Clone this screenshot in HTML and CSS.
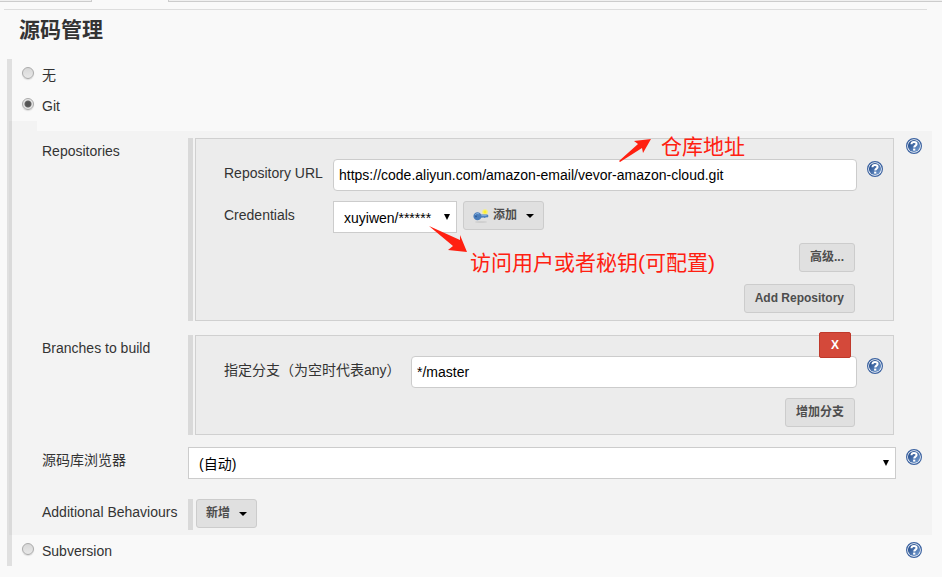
FILE: index.html
```html
<!DOCTYPE html>
<html lang="zh-CN">
<head>
    <meta charset="UTF-8">
    <meta name="viewport" content="width=device-width, initial-scale=1.0">
    <title>源码管理</title>
    <link rel="stylesheet" href="styles.css">
</head>
<body>
    <!-- shared icon shapes -->
    <svg class="sprite" aria-hidden="true">
        <defs>
            <linearGradient id="help-fill" x1="0" y1="0" x2="1" y2="1">
                <stop offset="0" stop-color="#173f80"/>
                <stop offset="1" stop-color="#7ba3d6"/>
            </linearGradient>
            <symbol id="help" viewBox="0 0 16 16">
                <circle cx="8" cy="8" r="7.4" fill="#fff" stroke="#3b62a0" stroke-width="1.2"/>
                <circle cx="8" cy="8" r="6.1" fill="url(#help-fill)"/>
                <path d="M5.4 6.3C5.5 4.5 6.6 3.9 8 3.9c1.6 0 2.6.8 2.6 2.1 0 1.6-2.4 1.6-2.4 3.6" fill="none" stroke="#fff" stroke-width="2"/>
                <rect x="7.1" y="10.6" width="2.2" height="2" fill="#fff"/>
            </symbol>
        </defs>
    </svg>

    <div class="tabs">
        <span class="tab tab-left"></span>
        <span class="tab tab-right"></span>
    </div>

    <form class="config">
        <h1>源码管理</h1>

        <div class="scm">
            <div class="choice">
                <input type="radio" name="scm" id="scm-none">
                <label for="scm-none">无</label>
            </div>
            <div class="choice">
                <input type="radio" name="scm" id="scm-git" checked>
                <label for="scm-git">Git</label>
            </div>

            <div class="notch"></div>
            <div class="git">
                <div class="row row-repositories">
                    <span class="name">Repositories</span>
                    <div class="chunk">
                        <div class="box">
                            <div class="field">
                                <label for="url">Repository URL</label>
                                <input type="text" id="url" value="https://code.aliyun.com/amazon-email/vevor-amazon-cloud.git">
                                <a class="help" href="#" aria-label="Help"><svg><use href="#help"/></svg></a>
                            </div>
                            <div class="field">
                                <label for="credentials">Credentials</label>
                                <div class="credentials">
                                    <div class="select">
                                        <select id="credentials">
                                            <option>xuyiwen/******</option>
                                        </select>
                                    </div>
                                    <button type="button" class="btn btn-menu">
                                        <svg class="key" viewBox="0 0 16 16" aria-hidden="true">
                                            <ellipse cx="8" cy="14" rx="6" ry="1" fill="#cfcfcf"/>
                                            <circle cx="12" cy="4" r="2.8" fill="#f7ef7a"/>
                                            <circle cx="12" cy="4" r="1.4" fill="#fff02a"/>
                                            <path d="M4.6 4.2C6.4 4.2 7.6 5.2 8.2 6.6L14.4 6.6 15.6 8 14.4 9.4 13 9.2 11.8 10 10.4 9.6 8.2 9.8C7.6 11.2 6.4 12.2 4.6 12.2 2.2 12.2.4 10.4.4 8.2.4 6 2.2 4.2 4.6 4.2Z" fill="#4a7dbb"/>
                                            <path d="M2 7C2.6 5.6 4.6 5 6.2 6M8.4 7.6H13.6" fill="none" stroke="#86afdd"/>
                                            <circle cx="3" cy="8.4" r="0.8" fill="#2b5590"/>
                                        </svg>
                                        添加
                                        <span class="caret"></span>
                                    </button>
                                </div>
                            </div>
                            <div class="actions">
                                <button type="button" class="btn">高级...</button>
                            </div>
                            <div class="actions">
                                <button type="button" class="btn">Add Repository</button>
                            </div>

                            <svg class="arrow arrow-url" viewBox="0 0 33 24" aria-hidden="true">
                                <path d="M0 22 L19 5 L15 2 L32 0 L24 14 L23 9 L1 23 Z"/>
                            </svg>
                            <span class="note note-url">仓库地址</span>
                            <svg class="arrow arrow-user" viewBox="0 0 39 27" aria-hidden="true">
                                <path d="M0 0 L31 14 L31 9 L38 26 L19 24 L24 20 Z"/>
                            </svg>
                            <span class="note note-user">访问用户或者秘钥(可配置)</span>
                        </div>
                    </div>
                    <a class="help" href="#" aria-label="Help"><svg><use href="#help"/></svg></a>
                </div>

                <div class="row">
                    <span class="name">Branches to build</span>
                    <div class="chunk">
                        <div class="box">
                            <button type="button" class="delete">X</button>
                            <div class="field field-wide">
                                <label for="branch">指定分支（为空时代表any）</label>
                                <input type="text" id="branch" value="*/master">
                                <a class="help" href="#" aria-label="Help"><svg><use href="#help"/></svg></a>
                            </div>
                            <div class="actions">
                                <button type="button" class="btn">增加分支</button>
                            </div>
                        </div>
                    </div>
                </div>

                <div class="row">
                    <label class="name" for="browser">源码库浏览器</label>
                    <div class="select">
                        <select id="browser">
                            <option>(自动)</option>
                        </select>
                    </div>
                    <a class="help help-low" href="#" aria-label="Help"><svg><use href="#help"/></svg></a>
                </div>

                <div class="row">
                    <span class="name">Additional Behaviours</span>
                    <div class="chunk chunk-plain">
                        <button type="button" class="btn btn-menu">新增 <span class="caret"></span></button>
                    </div>
                </div>
            </div>

            <div class="choice">
                <input type="radio" name="scm" id="scm-svn">
                <label for="scm-svn">Subversion</label>
                <a class="help" href="#" aria-label="Help"><svg><use href="#help"/></svg></a>
            </div>
        </div>
    </form>
</body>
</html>
```

FILE: styles.css
```css
* {
    box-sizing: border-box;
}
body {
    margin: 0;
    background: #f9f9f9;
    color: #333;
    font-family: "Liberation Sans", "Noto Sans CJK SC", sans-serif;
    font-size: 14px;
    line-height: 20px;
}
input, select, button {
    margin: 0;
    font-family: inherit;
}
.sprite {
    position: absolute;
    width: 0;
    height: 0;
}

/* bottom edge of the tab bar */
.tabs {
    display: flex;
    justify-content: space-between;
    gap: 76px;
    height: 2px;
}
.tab {
    background: #f0f0f0;
    border-bottom: 1px solid #ccc;
}
.tab-left {
    width: 92px;
    border-right: 1px solid #ccc;
}
.tab-right {
    flex: 1;
    border-left: 1px solid #ccc;
}

.config {
    margin: 7px 10px 0 7px;
}
h1 {
    margin: 0 5px 0 -3px;
    padding: 5px 0 19px 15px;
    border-top: 1px solid #ddd;
    font-size: 21px;
    line-height: 30px;
}
.scm {
    margin-top: -5px;
    border-left: 5px solid #e0e0e0;
}
.choice {
    display: flex;
    align-items: flex-start;
    height: 31px;
    padding: 6px 0 0 10px;
}
.choice label {
    flex: 1;
    margin-left: 8px;
}
.choice input {
    appearance: none;
    width: 12px;
    height: 12px;
    margin-top: 2px;
    border: 1px solid #aaa;
    border-radius: 50%;
    background: linear-gradient(#d8d8d8, #e8e8e8);
    box-shadow: 0 1px 1px #ddd;
}
.choice input:checked {
    background: radial-gradient(circle, #555 0 2px, #666 3px, #e6e6e6 4px);
}

/* the shaded block runs over the grey bar on its left */
.notch, .git {
    margin-left: -3px;
    background: rgba(0, 0, 0, 0.025);
}
.notch {
    width: 28px;
    height: 10px;
}
.git {
    display: flex;
    flex-direction: column;
    gap: 12px;
    padding: 7px 0 5px 33px;
}
.row {
    display: grid;
    grid-template-columns: 146px 1fr 36px;
}
.row-repositories {
    margin-bottom: 2px;
}
.row:last-child {
    margin-top: 8px;
}
.name {
    padding-top: 3px;
}
.chunk {
    margin-right: 2px;
    padding-left: 2px;
    border-left: 5px solid #d9d9d9;
}
.chunk-plain {
    padding: 0 0 2px 3px;
}
.box {
    position: relative;
    display: flex;
    flex-direction: column;
    gap: 10px;
    padding: 20px 0 7px 28px;
    border: 1px solid #d0d0d0;
    background: #ececec;
}
.field {
    display: grid;
    grid-template-columns: 109px 1fr 36px;
}
.field-wide {
    grid-template-columns: 187px 1fr 36px;
}
.field label {
    padding-top: 4px;
}
.field input {
    width: 100%;
    height: 32px;
    padding: 0 5px;
    border: 1px solid #ccc;
    border-radius: 4px;
    background: #fff;
    color: #000;
    font-size: 14px;
}
.credentials {
    display: flex;
    align-items: flex-start;
    gap: 6px;
}
.select {
    position: relative;
}
.credentials .select {
    width: 124px;
}
.select select {
    display: block;
    appearance: none;
    width: 100%;
    height: 32px;
    padding: 2px 10px 0;
    border: 1px solid #ccc;
    border-radius: 0;
    background: #fff;
    color: #000;
    font-size: 14px;
}
.select::after {
    content: "";
    position: absolute;
    top: 13px;
    right: 7px;
    border: 3px solid transparent;
    border-top: 6px solid #000;
    border-bottom: 0;
    pointer-events: none;
}
.help {
    width: 16px;
    height: 16px;
    margin-left: 10px;
}
.help-low, .field .help {
    margin-top: 2px;
}
.choice .help {
    margin-top: 1px;
    margin-right: 10px;
}
.help svg {
    display: block;
    width: 16px;
    height: 16px;
}

.btn {
    height: 29px;
    padding: 0 10px;
    border: 1px solid #ccc;
    border-radius: 3px;
    background: #e0e0e0;
    color: #4d4d4d;
    font-size: 12px;
    font-weight: bold;
    line-height: 25px;
}
.btn-menu {
    display: flex;
    align-items: center;
    padding: 0 9px;
}
.key {
    width: 16px;
    height: 16px;
    margin: 0 4px 0 0;
}
.caret {
    margin-left: 9px;
    border: 4px solid transparent;
    border-top-color: #000;
    border-bottom: 0;
}
.actions {
    display: flex;
    justify-content: flex-end;
    margin-right: 38px;
}
.actions + .actions {
    margin-top: 2px;
}
.delete {
    position: absolute;
    top: -4px;
    right: 42px;
    width: 32px;
    height: 26px;
    padding: 0;
    border: 1px solid #c0392b;
    border-radius: 2px;
    background: #d4493a;
    color: #fff;
    font-size: 12px;
    font-weight: bold;
}

/* red notes laid over the form */
.note {
    position: absolute;
    color: #ff2011;
    font-size: 21px;
    line-height: 30px;
    white-space: nowrap;
}
.note-url {
    top: -7px;
    left: 465px;
}
.note-user {
    top: 109px;
    left: 274px;
}
.arrow {
    position: absolute;
    fill: #ff2011;
}
.arrow-url {
    top: 0;
    left: 423px;
    width: 33px;
    height: 24px;
}
.arrow-user {
    top: 87px;
    left: 233px;
    width: 39px;
    height: 27px;
}
```
